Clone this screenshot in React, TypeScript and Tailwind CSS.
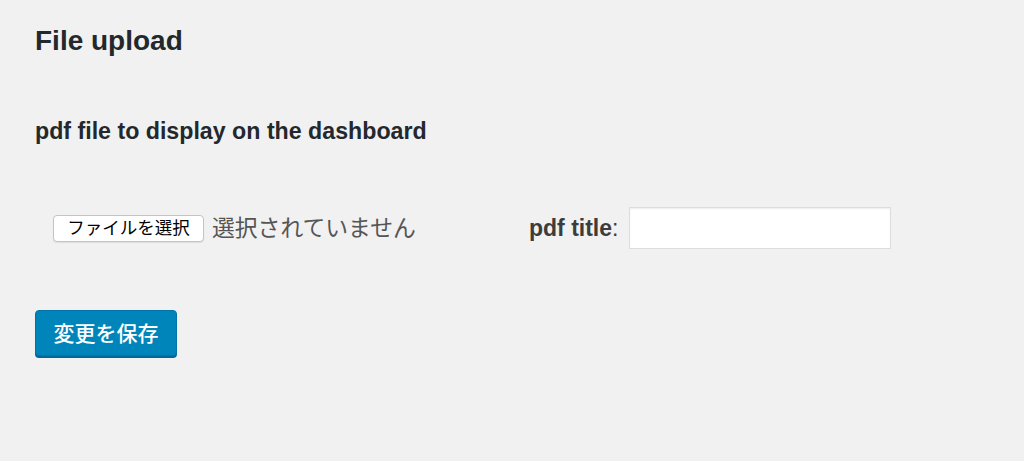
import React, { useState } from "react";

const jp = "font-['Liberation_Sans','Noto_Sans_CJK_JP',sans-serif]";

const App = () => {
  const [title, setTitle] = useState("");

  return (
    <main className={`min-h-[461px] w-full bg-[#f1f1f1] pl-[35px] pt-[24px] text-[#23282d] ${jp}`}>
      <h1 className="text-[28px] font-bold leading-[1.2]">File upload</h1>

      <h2 className="mt-[60px] text-[23.2px] font-bold leading-[1.2]">
        pdf file to display on the dashboard
      </h2>

      <div className="mt-[62px] flex h-[42px] items-center">
        <button className="ml-[18px] flex h-[27px] w-[151px] items-center justify-center rounded-[4px] border border-[#c4c4c4] bg-white text-[17.5px] leading-none text-black shadow-[0_1px_1px_rgba(0,0,0,0.08)]">
          ファイルを選択
        </button>
        <span className="ml-[8px] w-[317px] text-[22.8px] leading-none text-[#555]">
          選択されていません
        </span>
        <label className="flex items-center text-[23px] leading-none text-[#3c3c3c]">
          <span className="font-bold">pdf title</span>
          <span>:</span>
        </label>
        <input
          type="text"
          value={title}
          onChange={(e) => setTitle(e.target.value)}
          className="ml-[11px] h-[42px] w-[262px] border border-[#dddddd] bg-white px-2 text-[18px] shadow-[inset_0_1px_2px_rgba(0,0,0,0.07)] outline-none"
        />
      </div>

      <button className="mt-[61px] flex h-[46px] w-[142px] items-center justify-center rounded-[4px] border border-[#0073aa] bg-[#0085ba] text-[21px] font-medium leading-none text-white shadow-[0_2px_0_#006799]">
        変更を保存
      </button>
    </main>
  );
};

export default App;
